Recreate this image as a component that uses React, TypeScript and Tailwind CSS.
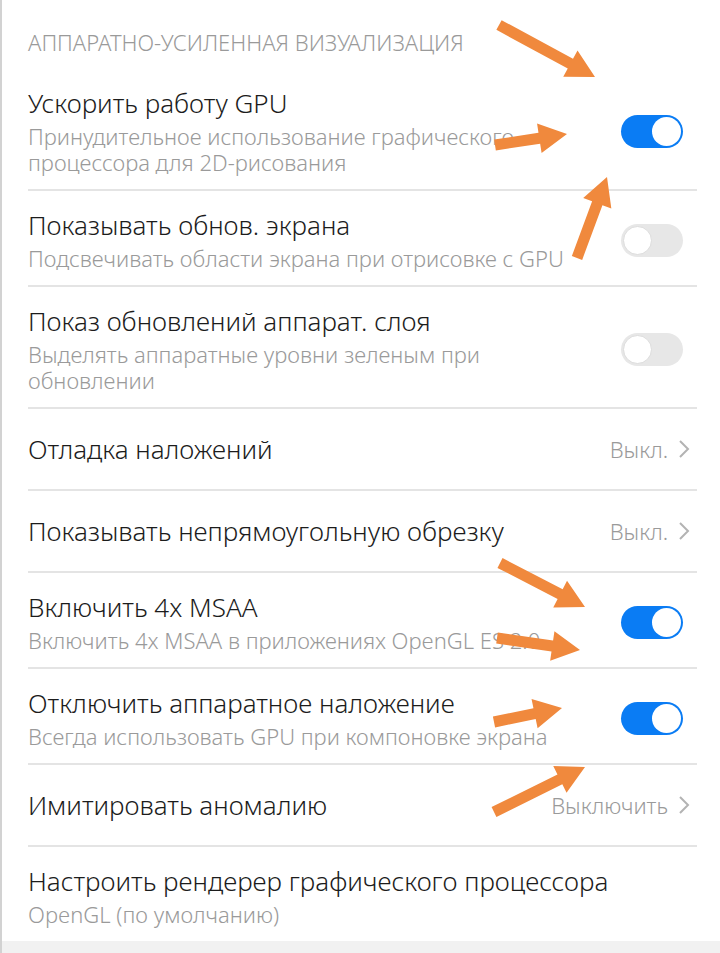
import React from "react";

type Row = {
  title: string;
  sub?: string[];
  toggle?: boolean;
  value?: string;
};

const rows: Row[] = [
  {
    title: "Ускорить работу GPU",
    sub: ["Принудительное использование графического", "процессора для 2D-рисования"],
    toggle: true,
  },
  {
    title: "Показывать обнов. экрана",
    sub: ["Подсвечивать области экрана при отрисовке с GPU"],
    toggle: false,
  },
  {
    title: "Показ обновлений аппарат. слоя",
    sub: ["Выделять аппаратные уровни зеленым при", "обновлении"],
    toggle: false,
  },
  { title: "Отладка наложений", value: "Выкл." },
  { title: "Показывать непрямоугольную обрезку", value: "Выкл." },
  {
    title: "Включить 4x MSAA",
    sub: ["Включить 4x MSAA в приложениях OpenGL ES 2.0"],
    toggle: true,
  },
  {
    title: "Отключить аппаратное наложение",
    sub: ["Всегда использовать GPU при компоновке экрана"],
    toggle: true,
  },
  { title: "Имитировать аномалию", value: "Выключить" },
];

function Toggle({ on }: { on: boolean }) {
  if (on) {
    return (
      <div className="mr-[14px] flex h-[33px] w-[62px] shrink-0 items-center rounded-full bg-[#0a7cf4] p-[2px]">
        <div className="ml-auto h-[29px] w-[29px] rounded-full bg-white" />
      </div>
    );
  }
  return (
    <div className="mr-[14px] flex h-[33px] w-[62px] shrink-0 items-center rounded-full bg-[#e7e7e7] p-[2px]">
      <div className="h-[29px] w-[29px] rounded-full border border-[#dcdcdc] bg-white" />
    </div>
  );
}

function Chevron() {
  return (
    <svg width="12" height="20" viewBox="0 0 12 20" className="ml-[10px] mr-[7px]">
      <polyline points="2,2 10,10 2,18" fill="none" stroke="#b3b3b3" strokeWidth="2" />
    </svg>
  );
}

function Arrow({ x1, y1, x2, y2 }: { x1: number; y1: number; x2: number; y2: number }) {
  const dx = x2 - x1;
  const dy = y2 - y1;
  const len = Math.hypot(dx, dy);
  const ux = dx / len;
  const uy = dy / len;
  const nx = -uy;
  const ny = ux;
  const head = 28;
  const hw = 15;
  const sw = 5.5;
  const bx = x2 - ux * head;
  const by = y2 - uy * head;
  const pts = [
    [x1 + nx * sw, y1 + ny * sw],
    [bx + nx * sw, by + ny * sw],
    [bx + nx * hw, by + ny * hw],
    [x2, y2],
    [bx - nx * hw, by - ny * hw],
    [bx - nx * sw, by - ny * sw],
    [x1 - nx * sw, y1 - ny * sw],
  ]
    .map((p) => p.join(","))
    .join(" ");
  return <polygon points={pts} fill="#f0893d" />;
}

export default function App() {
  return (
    <div className="relative flex h-[953px] w-[720px] flex-col overflow-hidden border-l-2 border-[#d2d2d2] bg-white font-['Noto_Sans','Roboto',sans-serif] font-light">
      <div className="pl-[26px] pt-[28px] pb-[13px] text-[22px] leading-[28px] text-[#9a9a9a]">
        АППАРАТНО-УСИЛЕННАЯ ВИЗУАЛИЗАЦИЯ
      </div>

      <div className="ml-[26px] mr-[23px]">
        {rows.map((r) => (
          <div
            key={r.title}
            className={
              r.sub
                ? "flex items-center border-b-2 border-[#e4e4e4] pt-[18px] pb-[14px]"
                : "flex h-[82px] items-center border-b-2 border-[#e4e4e4]"
            }
          >
            <div className="min-w-0 flex-1">
              <div className="text-[26px] leading-[32px] text-[#1c1c1c]">{r.title}</div>
              {r.sub && (
                <div className="mt-[4px] text-[22px] leading-[26px] text-[#9a9a9a]">
                  {r.sub.map((s) => (
                    <div key={s}>{s}</div>
                  ))}
                </div>
              )}
            </div>
            {r.toggle !== undefined && <Toggle on={r.toggle} />}
            {r.value && (
              <div className="flex items-center">
                <span className="text-[22px] text-[#9a9a9a]">{r.value}</span>
                <Chevron />
              </div>
            )}
          </div>
        ))}
        <div className="pt-[18px] pb-[14px]">
          <div className="text-[26px] leading-[32px] text-[#1c1c1c]">
            Настроить рендерер графического процессора
          </div>
          <div className="mt-[4px] text-[22px] leading-[26px] text-[#9a9a9a]">OpenGL (по умолчанию)</div>
        </div>
      </div>

      <div className="flex-1 bg-[#f1f1f1]" />

      <svg className="pointer-events-none absolute inset-0" width="720" height="953">
        <Arrow x1={497} y1={25} x2={593} y2={77} />
        <Arrow x1={493} y1={145} x2={565} y2={134} />
        <Arrow x1={575} y1={258} x2={605} y2={177} />
        <Arrow x1={498} y1={563} x2={583} y2={607} />
        <Arrow x1={495} y1={638} x2={578} y2={650} />
        <Arrow x1={492} y1={722} x2={560} y2={708} />
        <Arrow x1={492} y1={812} x2={583} y2={767} />
      </svg>
    </div>
  );
}
